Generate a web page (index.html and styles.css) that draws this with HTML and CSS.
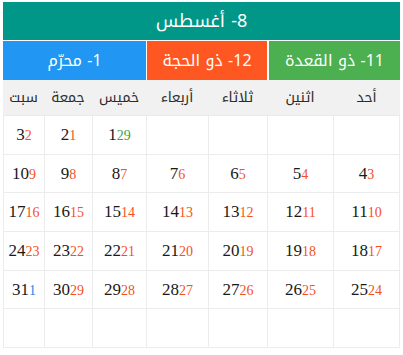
FILE: index.html
```html
<!DOCTYPE html>
<html lang="ar" dir="rtl">
<head>
<meta charset="utf-8">
<title>تقويم أغسطس</title>
<link rel="stylesheet" href="styles.css">
</head>
<body>
<div class="cal">
  <div class="title">8- أغسطس</div>
  <div class="month green c2">11- ذو القعدة</div>
  <div class="month orange c2">12- ذو الحجة</div>
  <div class="month blue c3">1- محرّم</div>

  <div class="dayname">أحد</div>
  <div class="dayname">اثنين</div>
  <div class="dayname">ثلاثاء</div>
  <div class="dayname">أربعاء</div>
  <div class="dayname">خميس</div>
  <div class="dayname">جمعة</div>
  <div class="dayname">سبت</div>

  <div class="cell first"></div>
  <div class="cell"></div>
  <div class="cell"></div>
  <div class="cell"></div>
  <div class="cell"><span class="n"><b>1</b><i class="g">29</i></span></div>
  <div class="cell"><span class="n"><b>2</b><i>1</i></span></div>
  <div class="cell"><span class="n"><b>3</b><i>2</i></span></div>

  <div class="cell first"><span class="n"><b>4</b><i>3</i></span></div>
  <div class="cell"><span class="n"><b>5</b><i>4</i></span></div>
  <div class="cell"><span class="n"><b>6</b><i>5</i></span></div>
  <div class="cell"><span class="n"><b>7</b><i>6</i></span></div>
  <div class="cell"><span class="n"><b>8</b><i>7</i></span></div>
  <div class="cell"><span class="n"><b>9</b><i>8</i></span></div>
  <div class="cell"><span class="n"><b>10</b><i>9</i></span></div>

  <div class="cell first"><span class="n"><b>11</b><i>10</i></span></div>
  <div class="cell"><span class="n"><b>12</b><i>11</i></span></div>
  <div class="cell"><span class="n"><b>13</b><i>12</i></span></div>
  <div class="cell"><span class="n"><b>14</b><i>13</i></span></div>
  <div class="cell"><span class="n"><b>15</b><i>14</i></span></div>
  <div class="cell"><span class="n"><b>16</b><i>15</i></span></div>
  <div class="cell"><span class="n"><b>17</b><i>16</i></span></div>

  <div class="cell first"><span class="n"><b>18</b><i>17</i></span></div>
  <div class="cell"><span class="n"><b>19</b><i>18</i></span></div>
  <div class="cell"><span class="n"><b>20</b><i>19</i></span></div>
  <div class="cell"><span class="n"><b>21</b><i>20</i></span></div>
  <div class="cell"><span class="n"><b>22</b><i>21</i></span></div>
  <div class="cell"><span class="n"><b>23</b><i>22</i></span></div>
  <div class="cell"><span class="n"><b>24</b><i>23</i></span></div>

  <div class="cell first"><span class="n"><b>25</b><i>24</i></span></div>
  <div class="cell"><span class="n"><b>26</b><i>25</i></span></div>
  <div class="cell"><span class="n"><b>27</b><i>26</i></span></div>
  <div class="cell"><span class="n"><b>28</b><i>27</i></span></div>
  <div class="cell"><span class="n"><b>29</b><i>28</i></span></div>
  <div class="cell"><span class="n"><b>30</b><i>29</i></span></div>
  <div class="cell"><span class="n"><b>31</b><i class="b">1</i></span></div>

  <div class="cell first"></div>
  <div class="cell"></div>
  <div class="cell"></div>
  <div class="cell"></div>
  <div class="cell"></div>
  <div class="cell"></div>
  <div class="cell"></div>
</div>
</body>
</html>
```
FILE: styles.css
```css
html, body {
  margin: 0;
  padding: 0;
  background: #fff;
}

.cal {
  direction: rtl;
  margin: 2px 3px 0 3px;
  width: 397px;
  display: grid;
  grid-template-columns: 67px 66px 59px 62px 54px 48px 41px;
  grid-template-rows: 39px 39px 36px;
  grid-auto-rows: 38.7px;
  font-family: "Noto Kufi Arabic", "Droid Arabic Kufi", "Noto Sans Arabic", "DejaVu Sans", sans-serif;
}

.title {
  grid-column: 1 / -1;
  background: #009688;
  color: #fff;
  font-size: 18px;
  display: flex;
  align-items: center;
  justify-content: center;
  border-bottom: 1px solid #fff;
}

.month {
  color: #fff;
  font-size: 16px;
  display: flex;
  align-items: center;
  justify-content: center;
  box-sizing: border-box;
}

.c2 { grid-column: span 2; }
.c3 { grid-column: span 3; }

.green { background: #4caf50; border-left: 2px solid #fff; }
.orange { background: #ff5722; border-left: 1px solid #fff; }
.blue { background: #2196f3; }

.dayname {
  background: #f1f1f1;
  color: #2b2b2b;
  font-size: 14px;
  display: flex;
  align-items: center;
  justify-content: center;
  border-bottom: 1px solid #e9e9e9;
}

.cell {
  border-left: 1px solid #ececec;
  border-bottom: 1px solid #ececec;
  display: flex;
  align-items: center;
  justify-content: center;
}

.cell.first {
  border-right: 1px solid #ececec;
}

.n {
  direction: ltr;
  unicode-bidi: isolate;
  font-family: "Liberation Serif", "Times New Roman", serif;
  white-space: nowrap;
}

.n b {
  font-weight: normal;
  font-size: 17px;
  color: #1a1a1a;
}

.n i {
  font-style: normal;
  font-size: 14px;
  color: #f4511e;
}

.n i.g { color: #43a047; }
.n i.b { color: #1e88e5; }
```
